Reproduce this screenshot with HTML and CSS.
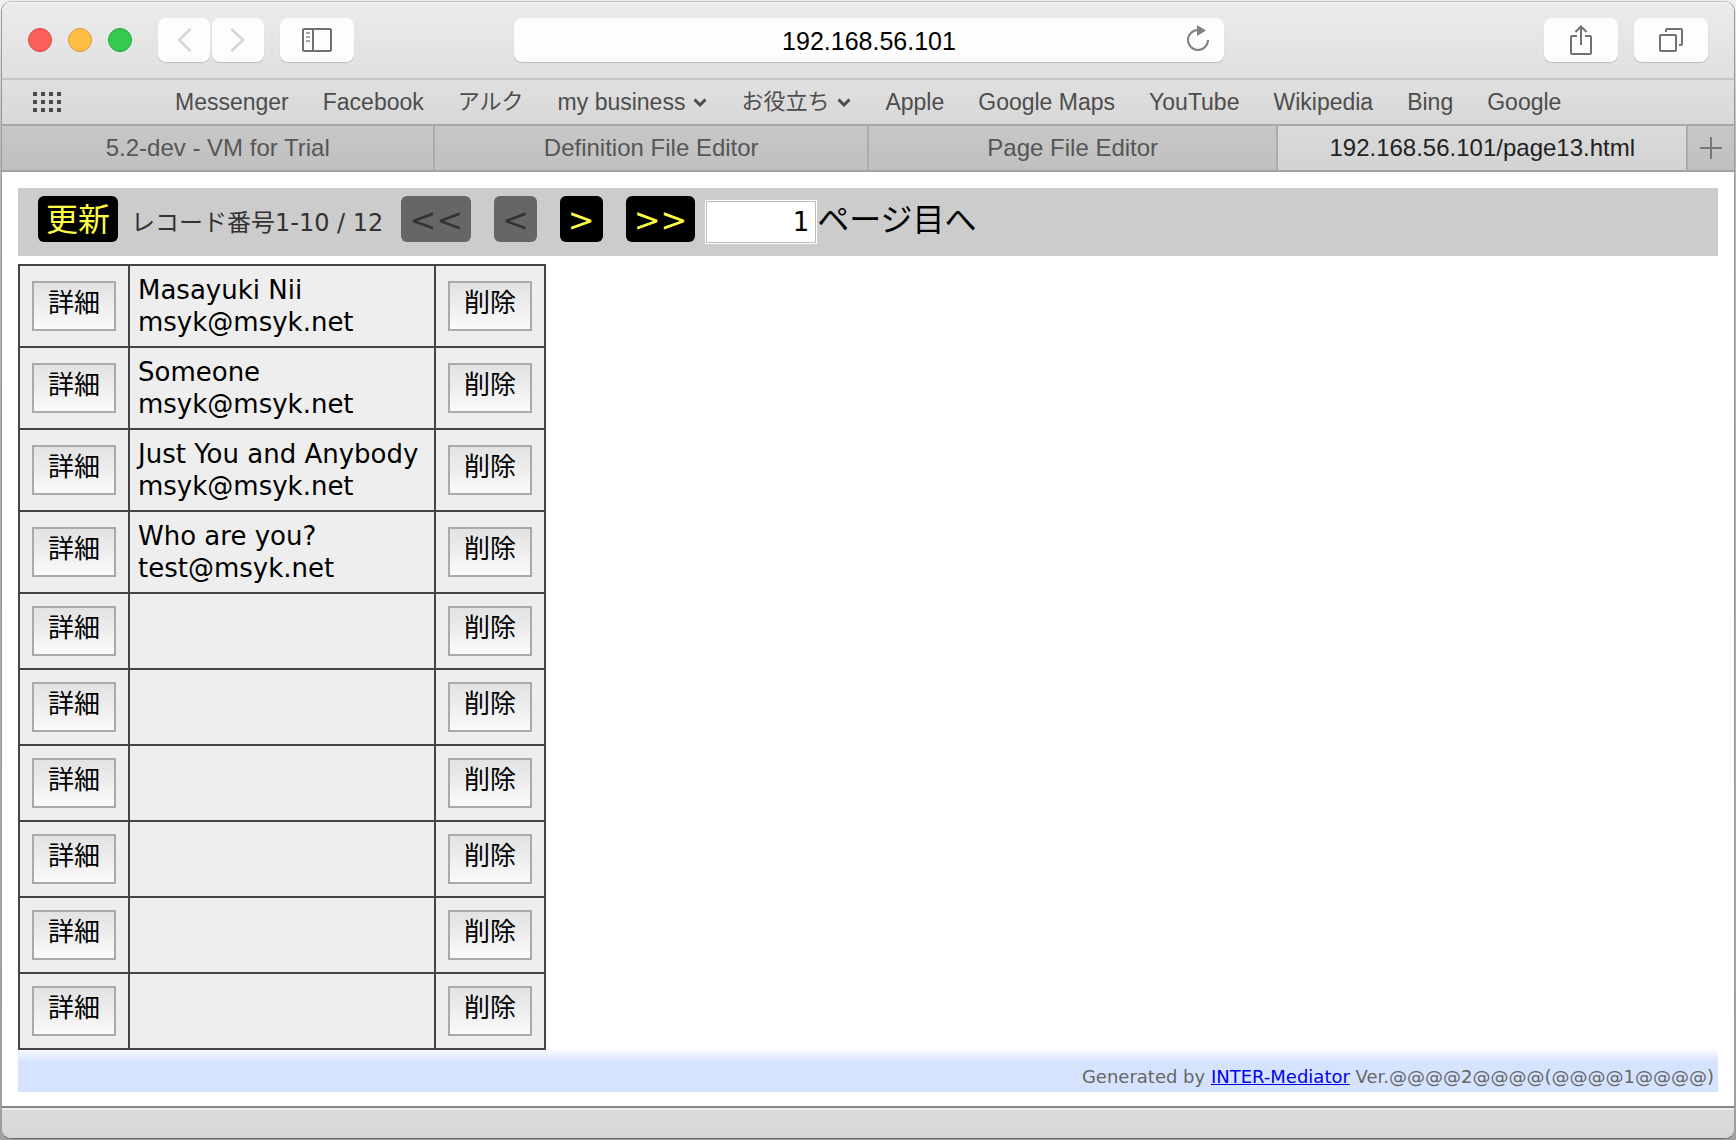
FILE: index.html
```html
<!DOCTYPE html>
<html lang="ja">
<head>
<meta charset="utf-8">
<title>192.168.56.101/page13.html</title>
<link rel="stylesheet" href="styles.css">
</head>
<body>
<div class="window">
  <header class="toolbar">
    <div class="group">
      <div class="lights">
        <button class="light red" aria-label="Close"></button>
        <button class="light amber" aria-label="Minimize"></button>
        <button class="light green" aria-label="Zoom"></button>
      </div>
      <div class="history">
        <button class="tool narrow" aria-label="Back"><svg width="16" height="26" viewBox="0 0 16 26"><path d="M14 2.500 3 13l11 10.500" fill="none" stroke="#d6d6d6" stroke-width="2.500" stroke-linecap="round" stroke-linejoin="round"/></svg></button>
        <button class="tool narrow" aria-label="Forward"><svg width="16" height="26" viewBox="0 0 16 26"><path d="M2 2.500 13 13 2 23.500" fill="none" stroke="#d6d6d6" stroke-width="2.500" stroke-linecap="round" stroke-linejoin="round"/></svg></button>
      </div>
      <button class="tool" aria-label="Sidebar"><svg width="30" height="24" viewBox="0 0 30 24"><g fill="none" stroke="#717171" stroke-width="2"><rect x="1" y="1" width="28" height="22" rx="1"/><path d="M11 1v22"/><path d="M4 5h4M4 9h4M4 13h4" stroke="#a5a5a5"/></g></svg></button>
    </div>
    <div class="address">
      <input class="url" type="text" aria-label="Address" value="192.168.56.101">
      <button class="reload" aria-label="Reload"><svg width="24" height="28" viewBox="0 0 24 28"><path d="M12 6a10 10 0 1 0 10 10" fill="none" stroke="#808080" stroke-width="2"/><path d="M11 1v11l9-5.500z" fill="#808080"/></svg></button>
    </div>
    <div class="group right">
      <button class="tool" aria-label="Share"><svg width="24" height="32" viewBox="0 0 24 32"><g fill="none" stroke="#717171" stroke-width="2"><path d="M8 12H3a1 1 0 0 0-1 1v16a1 1 0 0 0 1 1h18a1 1 0 0 0 1-1V13a1 1 0 0 0-1-1h-5"/><path d="M12 21V2.500M6.500 8 12 2.500 17.500 8"/></g></svg></button>
      <button class="tool" aria-label="Show all tabs"><svg width="26" height="26" viewBox="0 0 26 26"><g fill="none" stroke="#717171" stroke-width="2"><rect x="2" y="8" width="16" height="16" rx="1"/><path d="M8 5V3a1 1 0 0 1 1-1h14a1 1 0 0 1 1 1v14a1 1 0 0 1-1 1h-2"/></g></svg></button>
    </div>
  </header>

  <nav class="bookmarks">
    <button class="sites" aria-label="Top sites"><svg width="28" height="20" viewBox="0 0 28 20"><path d="M0 2h28M0 10h28M0 18h28" stroke="#4a4a4a" stroke-width="4" stroke-dasharray="4 4"/></svg></button>
    <a href="#">Messenger</a>
    <a href="#">Facebook</a>
    <a href="#" class="kana">アルク</a>
    <a href="#" class="folder">my business<svg width="14" height="9" viewBox="0 0 14 9"><path d="M1.500 1.500 7 7l5.500-5.500" fill="none" stroke="#4d4d4d" stroke-width="3"/></svg></a>
    <a href="#" class="folder kana">お役立ち<svg width="14" height="9" viewBox="0 0 14 9"><path d="M1.500 1.500 7 7l5.500-5.500" fill="none" stroke="#4d4d4d" stroke-width="3"/></svg></a>
    <a href="#">Apple</a>
    <a href="#">Google Maps</a>
    <a href="#">YouTube</a>
    <a href="#">Wikipedia</a>
    <a href="#">Bing</a>
    <a href="#">Google</a>
  </nav>

  <div class="tabs">
    <button class="tab wide">5.2-dev - VM for Trial</button>
    <button class="tab wide">Definition File Editor</button>
    <button class="tab">Page File Editor</button>
    <button class="tab active">192.168.56.101/page13.html</button>
    <button class="add" aria-label="New tab"><svg width="22" height="22" viewBox="0 0 22 22"><path d="M11 0v22M0 11h22" stroke="#777" stroke-width="2"/></svg></button>
  </div>

  <main class="page">
    <div class="navigator">
      <button class="nav">更新</button>
      <span class="count">レコード番号1-10 / 12</span>
      <div class="steps">
        <button class="nav" disabled>&lt;&lt;</button>
        <button class="nav" disabled>&lt;</button>
        <button class="nav">&gt;</button>
        <button class="nav">&gt;&gt;</button>
      </div>
      <input class="jump" id="jump" type="text" value="1">
      <label class="jump-label" for="jump">ページ目へ</label>
    </div>

    <table class="records">
      <colgroup><col class="action"><col><col class="action"></colgroup>
      <tbody>
        <tr><td><button class="act">詳細</button></td><td>Masayuki Nii<br>msyk@msyk.net</td><td><button class="act">削除</button></td></tr>
        <tr><td><button class="act">詳細</button></td><td>Someone<br>msyk@msyk.net</td><td><button class="act">削除</button></td></tr>
        <tr><td><button class="act">詳細</button></td><td>Just You and Anybody<br>msyk@msyk.net</td><td><button class="act">削除</button></td></tr>
        <tr><td><button class="act">詳細</button></td><td>Who are you?<br>test@msyk.net</td><td><button class="act">削除</button></td></tr>
        <tr><td><button class="act">詳細</button></td><td></td><td><button class="act">削除</button></td></tr>
        <tr><td><button class="act">詳細</button></td><td></td><td><button class="act">削除</button></td></tr>
        <tr><td><button class="act">詳細</button></td><td></td><td><button class="act">削除</button></td></tr>
        <tr><td><button class="act">詳細</button></td><td></td><td><button class="act">削除</button></td></tr>
        <tr><td><button class="act">詳細</button></td><td></td><td><button class="act">削除</button></td></tr>
        <tr><td><button class="act">詳細</button></td><td></td><td><button class="act">削除</button></td></tr>
      </tbody>
    </table>

    <footer class="credit">Generated by <a href="#">INTER-Mediator</a> Ver.@@@@2@@@@(@@@@1@@@@)</footer>
  </main>

  <div class="statusbar"></div>
</div>
</body>
</html>
```

FILE: styles.css
```css
* { box-sizing: border-box; }

body {
  margin: 0;
  padding: 1px;
  background: linear-gradient(#f0f0f0, #b4b4b4 160px, #a0a0a0);
  font-family: "DejaVu Sans", "Noto Sans CJK JP", sans-serif;
}

button, input {
  margin: 0;
  padding: 0;
  border: 0;
  font: inherit;
}

svg { display: block; }

.window {
  display: flex;
  flex-direction: column;
  min-height: calc(100vh - 2px);
  border: 1px solid #9a9a9a;
  border-top-color: #bdbdbd;
  border-bottom-color: #6c6c6c;
  border-radius: 10px;
  overflow: hidden;
  background: #fff;
}

/* Browser chrome */
.toolbar, .bookmarks, .tabs {
  font-family: "Liberation Sans", "Noto Sans CJK JP", sans-serif;
}

.toolbar {
  display: grid;
  grid-template-columns: auto 16fr 71fr 32fr auto;
  align-items: center;
  height: 78px;
  padding: 0 26px;
  border-bottom: 2px solid #c6c6c6;
  background: linear-gradient(#f6f6f6, #ebebeb 3px, #e0e0e0);
}

.group { display: flex; align-items: center; gap: 16px; }
.group.right { grid-column: 5; }
.lights { display: flex; gap: 16px; margin-right: 10px; }

.light {
  width: 24px;
  height: 24px;
  border: 1px solid;
  border-radius: 50%;
}
.red { background: #fc605c; border-color: #de4643; }
.amber { background: #fdbe45; border-color: #dd9d37; }
.green { background: #34c94f; border-color: #27a83a; }

.history { display: flex; gap: 2px; }

.tool {
  display: flex;
  align-items: center;
  justify-content: center;
  width: 74px;
  height: 44px;
  border-radius: 8px;
  background: #fdfdfd;
  box-shadow: 0 1px 1px #b9bcbb;
}
.tool.narrow { width: 52px; }

.address {
  grid-column: 3;
  display: flex;
  height: 44px;
  border-radius: 8px;
  background: #fdfdfd;
  box-shadow: 0 1px 1px #b9bcbb;
}
.url {
  flex: 1;
  min-width: 0;
  padding: 2px 0 0 52px;
  background: none;
  font-size: 25px;
  text-align: center;
  color: #000;
}
.reload {
  display: flex;
  align-items: center;
  justify-content: center;
  width: 52px;
  height: 40px;
  background: none;
}

.bookmarks {
  display: flex;
  align-items: center;
  gap: 34px;
  height: 46px;
  padding-left: 31px;
  border-bottom: 2px solid #a8a8a8;
  background: linear-gradient(#e0e0e0, #d8d8d8);
  font-size: 23px;
  line-height: 32px;
  white-space: nowrap;
}
.bookmarks a { color: #4d4d4d; text-decoration: none; }
.bookmarks .kana { font-size: 22px; }
.sites { margin-right: 80px; background: none; }
.folder { display: flex; align-items: center; gap: 8px; }

.tabs {
  display: flex;
  height: 46px;
  border-bottom: 2px solid #a3a3a3;
  background: linear-gradient(#c7c7c7, #c0c0c0);
  font-size: 24px;
}
.tab {
  flex: 102;
  border-right: 2px solid #acacac;
  background: none;
  color: #565656;
  white-space: nowrap;
}
.tab.wide { flex: 108; }
.tab.active { background: linear-gradient(#dadada, #d3d3d3); color: #222; }
.add {
  display: flex;
  align-items: center;
  justify-content: center;
  width: 46px;
  background: none;
}

/* Web page */
.page { flex: 1; padding: 16px 16px 14px; }

.navigator {
  display: flex;
  align-items: flex-start;
  height: 68px;
  padding: 8px 20px;
  background: #ccc;
}
.nav {
  height: 46px;
  padding: 0 8px;
  border-radius: 6px;
  background: #000;
  color: #ff4;
  font-size: 32px;
  line-height: 48px;
}
.nav:disabled { background: #666; color: #333; }
.count {
  margin: 0 18px 0 13px;
  color: #333;
  font-size: 24px;
  line-height: 54px;
  white-space: nowrap;
}
.steps { display: flex; gap: 23px; }
.jump {
  width: 112px;
  height: 44px;
  margin: 4px 0 0 10px;
  padding: 0 7px;
  border: 1px solid #fff;
  outline: 1px solid #bbb;
  outline-offset: -2px;
  background: #fff;
  font-size: 26px;
  text-align: right;
  color: #000;
}
.jump-label { font-size: 32px; line-height: 48px; white-space: nowrap; }

.records {
  width: 528px;
  margin-top: 8px;
  border-collapse: collapse;
  table-layout: fixed;
  background: #eee;
  font-size: 26px;
  line-height: 32px;
}
.action { width: 110px; }
.records td {
  height: 76px;
  padding: 8px;
  border: 2px solid #444;
  white-space: nowrap;
}
.act {
  display: block;
  width: 84px;
  height: 50px;
  margin: 0 auto;
  padding-bottom: 6px;
  border: 2px solid #aaa;
  background: linear-gradient(#e2e2e2, #fafafa);
  color: #000;
  line-height: 40px;
}

.credit {
  height: 42px;
  padding: 12px 4px 0 0;
  background: linear-gradient(#f8faff, #d6e3ff 12px);
  color: #666;
  font-size: 18px;
  line-height: 30px;
  text-align: right;
}
.credit a { color: #00e; }

.statusbar {
  height: 32px;
  border-top: 2px solid #838483;
  background: linear-gradient(#ececec 2px, #dcdcdc 2px, #d6d6d6);
}
```
